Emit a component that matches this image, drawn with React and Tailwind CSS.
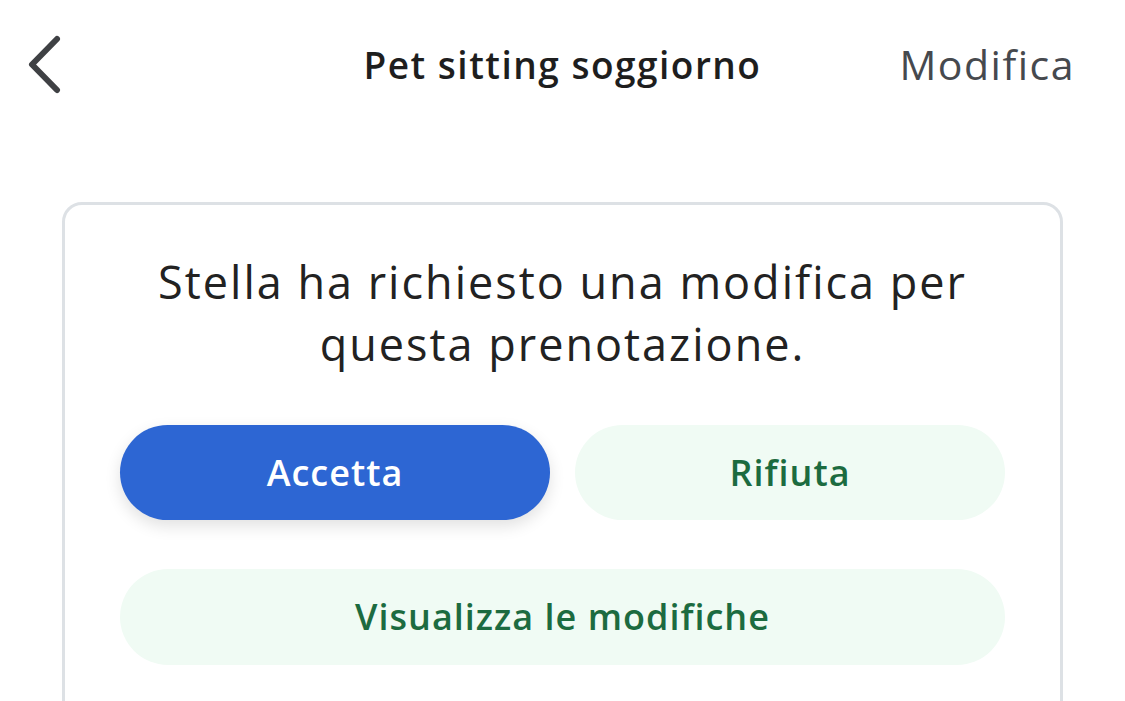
export default function App() {
  return (
    <div className="h-[701px] w-[1125px] overflow-hidden bg-white font-['Open_Sans',sans-serif]">
      <div className="grid h-[134px] grid-cols-[1fr_auto_1fr] items-center pl-[26px] pr-[50px] pb-[4px]">
        <button className="flex h-[60px] w-[40px] items-center">
          <svg width="38" height="60" viewBox="0 0 38 60" fill="none">
            <path d="M31 4 L6 29.5 L31 55" stroke="#3f4144" strokeWidth="6" strokeLinecap="round" strokeLinejoin="round" />
          </svg>
        </button>
        <h1 className="pl-[24px] text-[37px] font-semibold tracking-[1.5px] text-[#1e1e1e]">Pet sitting soggiorno</h1>
        <span className="justify-self-end text-[41px] tracking-[1.5px] text-[#46494e]">Modifica</span>
      </div>

      <div className="mx-[62px] mt-[68px] h-[560px] rounded-[20px] border-[3px] border-[#dde1e5] px-[40px] pt-[46px]">
        <p className="text-center text-[45px] leading-[62px] tracking-[2px] text-[#222]">
          Stella ha richiesto una modifica per
          <br />
          questa prenotazione.
        </p>
        <div className="mx-[15px] mt-[50px] grid grid-cols-2 gap-[25px]">
          <button className="h-[95px] rounded-full bg-[#2d66d3] text-[36px] font-semibold tracking-[1px] text-white shadow-[0_6px_16px_rgba(0,0,0,0.12)]">
            Accetta
          </button>
          <button className="h-[95px] rounded-full bg-[#f0fbf4] text-[36px] font-semibold tracking-[1px] text-[#1c6b40]">
            Rifiuta
          </button>
        </div>
        <button className="mx-[15px] mt-[49px] h-[96px] w-[calc(100%-30px)] rounded-full bg-[#f0fbf4] text-[36px] font-semibold tracking-[1px] text-[#1c6b40]">
          Visualizza le modifiche
        </button>
      </div>
    </div>
  );
}
